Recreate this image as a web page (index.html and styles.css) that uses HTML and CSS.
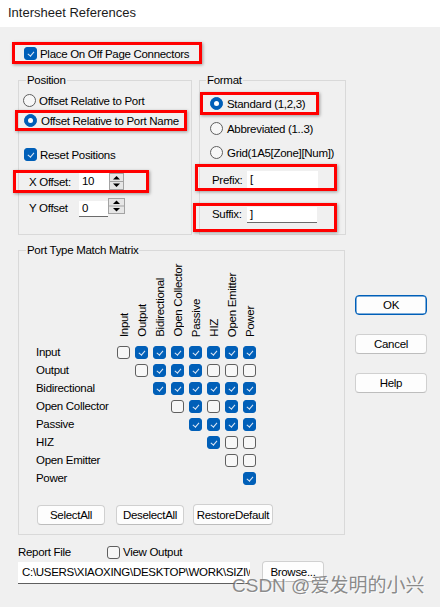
FILE: index.html
```html
<!DOCTYPE html>
<html>
<head>
<meta charset="utf-8">
<title>Intersheet References</title>
<link rel="stylesheet" href="styles.css">
</head>
<body>
<div class="window">
  <div class="titlebar">Intersheet References</div>
  <div class="client">
    <div class="mark mark-place"><span class="cb on"></span><span>Place On Off Page Connectors</span></div>

    <div class="groups">
      <div class="group g-pos">
        <span class="legend">Position</span>
        <div class="row r-rel"><span class="rb"></span><span>Offset Relative to Port</span></div>
        <div class="mark mark-name"><span class="rb on"></span><span>Offset Relative to Port Name</span></div>
        <div class="row r-reset"><span class="cb on"></span><span>Reset Positions</span></div>
        <div class="mark mark-x">
          <span class="flabel">X Offset:</span>
          <span class="field num-x">10</span>
          <svg class="spin" width="15" height="17" viewBox="0 0 15 17"><rect x="0.5" y="0.5" width="14" height="16" fill="#e6e6e6" stroke="#a3a3a3"/><line x1="1" y1="8.5" x2="14" y2="8.5" stroke="#a3a3a3"/><path d="M4 6.5h7l-3.5-3.5z" fill="#000"/><path d="M4 10.5h7l-3.5 3.5z" fill="#000"/></svg>
        </div>
        <div class="row r-y">
          <span class="flabel">Y Offset</span>
          <span class="field num-y">0</span>
          <svg class="spin spin-y" width="17" height="16" viewBox="0 0 17 16"><rect x="0.5" y="0.5" width="16" height="15" fill="#e6e6e6" stroke="#a3a3a3"/><line x1="1" y1="8" x2="16" y2="8" stroke="#a3a3a3"/><path d="M5 6h7l-3.5-3.5z" fill="#000"/><path d="M5 10h7l-3.5 3.5z" fill="#000"/></svg>
        </div>
      </div>

      <div class="group g-fmt">
        <span class="legend">Format</span>
        <div class="mark mark-std"><span class="rb on"></span><span>Standard (1,2,3)</span></div>
        <div class="row r-abbr"><span class="rb"></span><span>Abbreviated (1..3)</span></div>
        <div class="row r-grid"><span class="rb"></span><span>Grid(1A5[Zone][Num])</span></div>
        <div class="mark mark-prefix"><span class="flabel2">Prefix:</span><span class="field f-prefix">[</span></div>
        <div class="mark mark-suffix"><span class="flabel2">Suffix:</span><span class="field f-suffix">]</span></div>
      </div>
    </div>

    <div class="mid">
      <div class="group g-matrix">
        <span class="legend">Port Type Match Matrix</span>
        <div class="mhead">
          <span></span>
          <span class="mh"><span class="vt">Input</span></span>
          <span class="mh"><span class="vt">Output</span></span>
          <span class="mh"><span class="vt">Bidirectional</span></span>
          <span class="mh"><span class="vt">Open Collector</span></span>
          <span class="mh"><span class="vt">Passive</span></span>
          <span class="mh"><span class="vt">HIZ</span></span>
          <span class="mh"><span class="vt">Open Emitter</span></span>
          <span class="mh"><span class="vt">Power</span></span>
        </div>
        <div class="mbody">
          <div class="mrow"><span>Input</span><span class="mc"><i class="cb"></i></span><span class="mc"><i class="cb on"></i></span><span class="mc"><i class="cb on"></i></span><span class="mc"><i class="cb on"></i></span><span class="mc"><i class="cb on"></i></span><span class="mc"><i class="cb on"></i></span><span class="mc"><i class="cb on"></i></span><span class="mc"><i class="cb on"></i></span></div>
          <div class="mrow"><span>Output</span><span class="mc"></span><span class="mc"><i class="cb"></i></span><span class="mc"><i class="cb on"></i></span><span class="mc"><i class="cb on"></i></span><span class="mc"><i class="cb on"></i></span><span class="mc"><i class="cb"></i></span><span class="mc"><i class="cb"></i></span><span class="mc"><i class="cb"></i></span></div>
          <div class="mrow"><span>Bidirectional</span><span class="mc"></span><span class="mc"></span><span class="mc"><i class="cb on"></i></span><span class="mc"><i class="cb on"></i></span><span class="mc"><i class="cb on"></i></span><span class="mc"><i class="cb on"></i></span><span class="mc"><i class="cb on"></i></span><span class="mc"><i class="cb on"></i></span></div>
          <div class="mrow"><span>Open Collector</span><span class="mc"></span><span class="mc"></span><span class="mc"></span><span class="mc"><i class="cb"></i></span><span class="mc"><i class="cb on"></i></span><span class="mc"><i class="cb"></i></span><span class="mc"><i class="cb on"></i></span><span class="mc"><i class="cb on"></i></span></div>
          <div class="mrow"><span>Passive</span><span class="mc"></span><span class="mc"></span><span class="mc"></span><span class="mc"></span><span class="mc"><i class="cb on"></i></span><span class="mc"><i class="cb on"></i></span><span class="mc"><i class="cb on"></i></span><span class="mc"><i class="cb on"></i></span></div>
          <div class="mrow"><span>HIZ</span><span class="mc"></span><span class="mc"></span><span class="mc"></span><span class="mc"></span><span class="mc"></span><span class="mc"><i class="cb on"></i></span><span class="mc"><i class="cb"></i></span><span class="mc"><i class="cb"></i></span></div>
          <div class="mrow"><span>Open Emitter</span><span class="mc"></span><span class="mc"></span><span class="mc"></span><span class="mc"></span><span class="mc"></span><span class="mc"></span><span class="mc"><i class="cb"></i></span><span class="mc"><i class="cb"></i></span></div>
          <div class="mrow"><span>Power</span><span class="mc"></span><span class="mc"></span><span class="mc"></span><span class="mc"></span><span class="mc"></span><span class="mc"></span><span class="mc"></span><span class="mc"><i class="cb on"></i></span></div>
        </div>
        <div class="mbtns">
          <span class="btn b-sel">SelectAll</span>
          <span class="btn b-desel">DeselectAll</span>
          <span class="btn b-rest">RestoreDefault</span>
        </div>
      </div>

      <div class="side">
        <span class="btn b-side b-ok">OK</span>
        <span class="btn b-side">Cancel</span>
        <span class="btn b-side">Help</span>
      </div>
    </div>

    <div class="report">
      <span class="rlabel">Report File</span>
      <span class="cb"></span><span class="vo">View Output</span>
    </div>
    <div class="pathrow">
      <span class="path">C:\USERS\XIAOXING\DESKTOP\WORK\SIZI\OUTPUT.TXT</span>
      <span class="btn b-browse">Browse...</span>
    </div>
  </div>
  <div class="watermark">CSDN @爱发明的小兴</div>
</div>
</body>
</html>
```

FILE: styles.css
```css
* { box-sizing: border-box; }
html, body { margin: 0; padding: 0; }
body {
  width: 440px; height: 607px; overflow: hidden;
  background: #f0f0f0;
  font-family: "Liberation Sans", Arial, sans-serif;
  font-size: 11.5px; letter-spacing: -0.3px; color: #000;
}
.window { position: relative; width: 440px; height: 607px; display: flex; flex-direction: column; }
.titlebar {
  height: 27px; background: #fff; display: flex; align-items: center;
  padding: 0 0 3px 8px; letter-spacing: 0;
  font-family: "Liberation Sans", Arial, sans-serif; font-size: 13px; color: #1b1b1b;
}
.client { flex: 1; display: flex; flex-direction: column; align-items: flex-start; }

/* red annotation boxes */
.mark {
  border: 3px solid #ff0000;
  box-shadow: 1px 1px 3px rgba(0,0,0,0.35);
  display: flex; align-items: center; gap: 3px;
  line-height: 14px; white-space: nowrap;
}
.row { display: flex; align-items: center; gap: 3px; height: 13px; line-height: 14px; white-space: nowrap; }

/* controls */
.cb, .rb {
  position: relative; display: inline-block; flex: none;
  width: 13px; height: 13px; border: 1px solid #5f5f5f; background: #f7f7f7;
}
.cb { border-radius: 3px; }
.rb { border-radius: 50%; }
.cb.on { background: #005fb8; border-color: #005fb8; }
.cb.on::after {
  content: ""; position: absolute; left: 3.5px; top: 2px;
  width: 2.5px; height: 5px;
  border: solid #dfe9f6; border-width: 0 1px 1px 0;
  transform: rotate(40deg);
}
.rb.on { background: #005fb8; border-color: #005fb8; }
.rb.on::after {
  content: ""; position: absolute; left: 3px; top: 3px;
  width: 5px; height: 5px; border-radius: 50%; background: #fff;
}
.field {
  display: inline-block; background: #fff; flex: none;
  line-height: 16px; padding-left: 3px; white-space: nowrap; overflow: hidden;
}

/* group boxes */
.group { position: relative; border: 1px solid #d9d9d9; display: flex; flex-direction: column; align-items: flex-start; flex: none; }
.legend {
  position: absolute; top: -8px; left: 7px; padding: 0 1px;
  background: #f0f0f0; line-height: 14px; white-space: nowrap;
}

.mark-place { margin: 15px 0 0 12px; width: 190px; height: 22px; padding: 1px 0 0 9px; }

.groups { display: flex; gap: 7px; margin: 16px 0 0 18px; }
.g-pos { width: 174px; height: 155px; }
.g-fmt { width: 147px; height: 155px; }
.g-fmt .legend { left: 6px; }

.r-rel { margin: 13px 0 0 4px; }
.mark-name { margin: 3px 0 0 -4px; width: 172px; height: 21px; padding-left: 6px; gap: 4px; }
.r-reset { margin: 17px 0 0 5px; }
.mark-x { margin: 9px 0 0 -6px; width: 136px; height: 23px; padding-left: 13px; gap: 0; }
.flabel { width: 50px; flex: none; }
.num-x { width: 30px; height: 17px; }
.r-y { margin: 5px 0 0 10px; height: 19px; gap: 0; align-items: flex-end; }
.r-y .flabel { align-self: center; }
.num-y { width: 29px; height: 16px; border-bottom: 1px solid #6b6b6b; line-height: 15px; }
.spin { display: block; flex: none; }
.spin-y { align-self: flex-start; }

.mark-std { margin: 11px 0 0 0; width: 119px; height: 23px; padding-left: 7px; gap: 4px; }
.r-abbr { margin: 7px 0 0 10px; gap: 4px; }
.r-grid { margin: 11px 0 0 10px; gap: 4px; }
.flabel2 { width: 35px; flex: none; }
.mark-prefix { margin: 5px 0 0 -5px; width: 142px; height: 27px; padding: 4px 0 0 14px; gap: 0; }
.f-prefix { width: 71px; height: 17px; }
.mark-suffix { margin: 12px 0 0 -7px; width: 144px; height: 29px; padding: 0 0 0 16px; gap: 0; align-items: flex-start; }
.mark-suffix .flabel2 { margin-top: 1px; }
.f-suffix { width: 70px; height: 16px; margin-top: 1px; border-bottom: 1px solid #6b6b6b; line-height: 15px; }

/* matrix */
.mid { display: flex; align-items: flex-start; margin: 15px 0 0 18px; }
.g-matrix { width: 327px; height: 285px; }
.mhead {
  display: grid; grid-template-columns: 79px repeat(8, 18px);
  height: 72px; margin: 14px 0 0 17px;
}
.mh { display: flex; align-items: flex-end; justify-content: center; height: 72px; }
.vt {
  writing-mode: vertical-rl; transform: rotate(180deg);
  line-height: 14px; white-space: nowrap;
}
.mbody { margin: 6px 0 0 17px; }
.mrow {
  display: grid; grid-template-columns: 79px repeat(8, 18px);
  height: 18px; align-items: center; line-height: 14px; white-space: nowrap;
}
.mc { display: flex; padding-left: 2px; }
.mbtns { display: flex; align-items: flex-end; margin: 17px 0 0 18px; }

.btn {
  display: flex; align-items: center; justify-content: center; flex: none;
  background: #fdfdfd; border: 1px solid #d0d0d0; border-bottom-color: #bdbdbd;
  border-radius: 4px; line-height: 14px; white-space: nowrap;
}
.b-sel { width: 68px; height: 20px; }
.b-desel { width: 68px; height: 20px; margin-left: 11px; }
.b-rest { width: 80px; height: 21px; margin-left: 9px; }

.side { display: flex; flex-direction: column; gap: 19px; margin: 45px 0 0 10px; }
.b-side { width: 72px; height: 20px; }
.b-ok { border: 1px solid #005fb8; box-shadow: inset 0 0 0 0.5px #005fb8; }

/* report file */
.report { display: flex; align-items: center; height: 14px; margin: 10px 0 0 18px; line-height: 14px; white-space: nowrap; }
.rlabel { width: 89px; }
.vo { margin-left: 3px; }
.pathrow { display: flex; align-items: flex-start; margin: 3px 0 0 18px; }
.path {
  display: block; width: 232px; height: 22px; background: #fff;
  border-bottom: 1px solid #5f5f5f; padding-left: 4px;
  line-height: 20px; white-space: nowrap; overflow: hidden;
}
.b-browse { width: 62px; height: 21px; margin: -1px 0 0 12px; }

.watermark {
  position: absolute; left: 232px; top: 575px;
  font-family: "Liberation Sans", "Noto Sans CJK SC", sans-serif;
  font-size: 19px; line-height: 21px; letter-spacing: 0; white-space: nowrap;
  color: rgba(110,110,110,0.8);
  text-shadow: 1px 1px 0 rgba(255,255,255,0.7);
}
```
